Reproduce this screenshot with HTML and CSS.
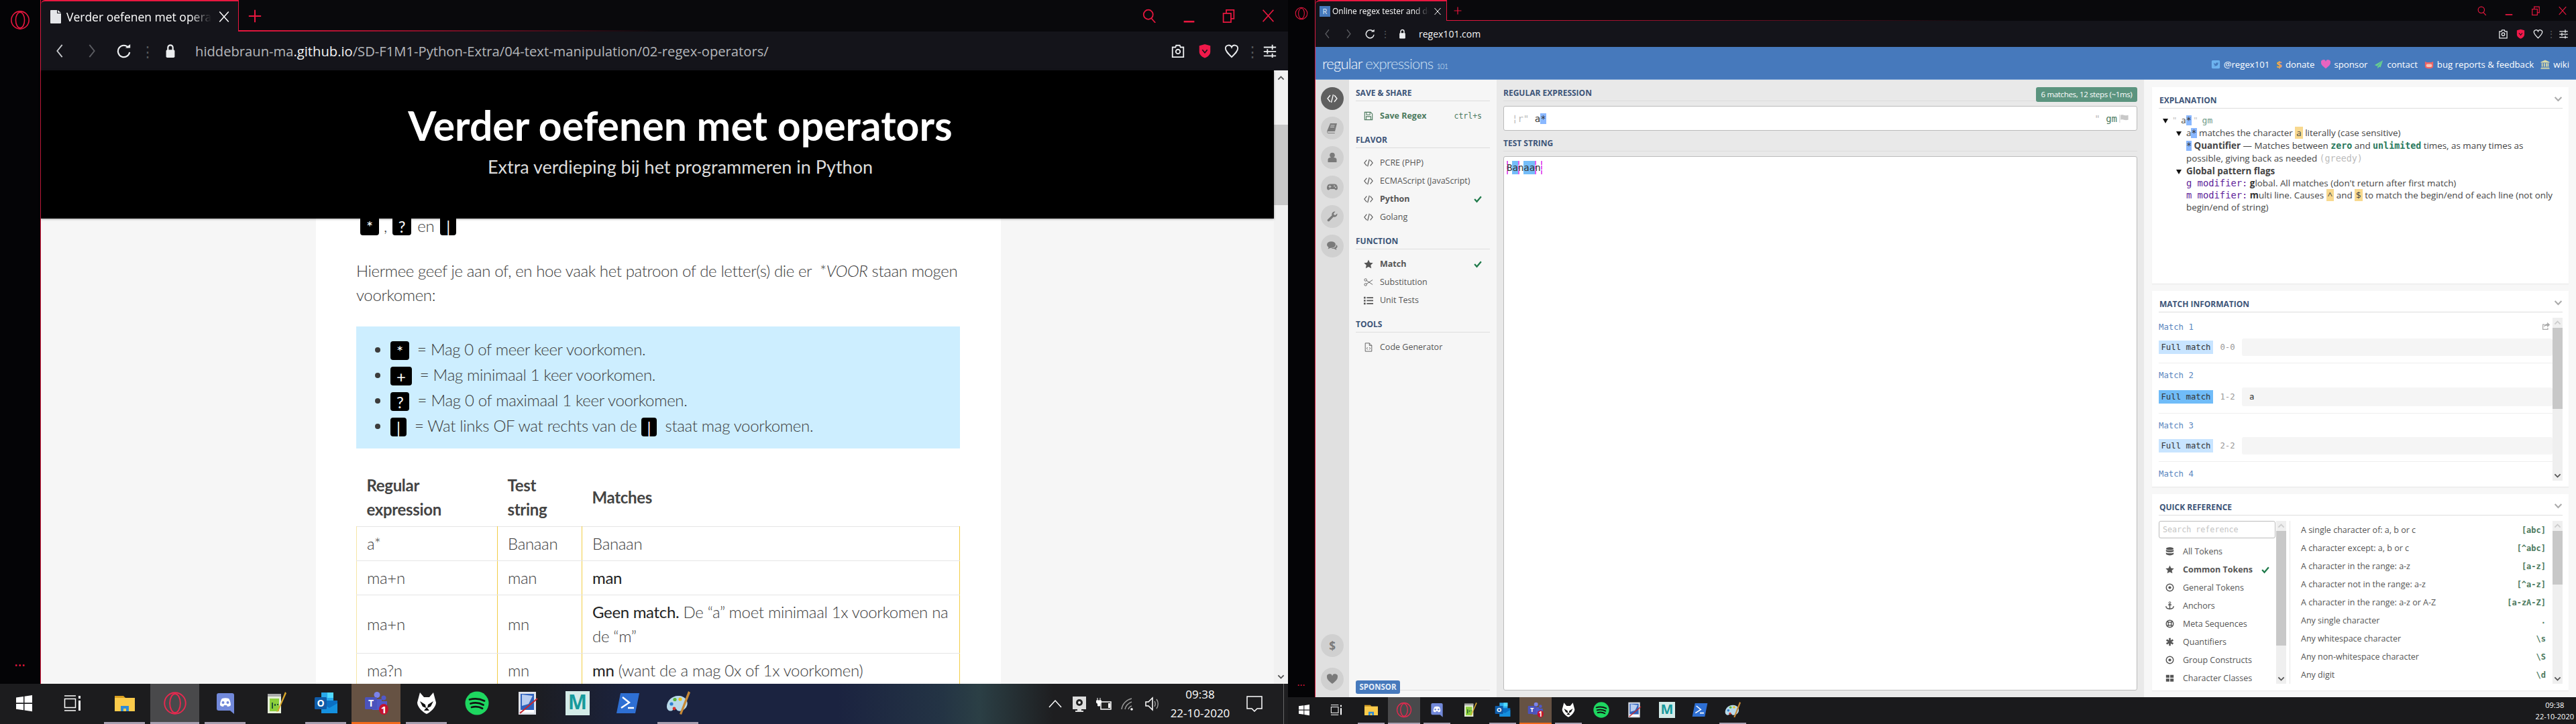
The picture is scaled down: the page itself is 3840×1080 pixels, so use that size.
FILE: index.html
```html
<!DOCTYPE html>
<html lang="en">
  <head>
    <meta charset="UTF-8" />
    <title>Verder oefenen met operators / regex101</title>
    <link rel="stylesheet" href="styles.css">
  </head>
  <body>
    <svg class="sprites" xmlns="http://www.w3.org/2000/svg">
      <!-- browser chrome -->
      <symbol id="i-opera" viewBox="0 0 32 32"><circle cx="16" cy="16" r="14" fill="none" stroke="currentColor" stroke-width="1.700"/><ellipse cx="16" cy="16" rx="7" ry="12.500" fill="none" stroke="currentColor" stroke-width="1.700"/></symbol>
      <symbol id="i-doc" viewBox="0 0 16 20"><path d="M0 1a1 1 0 0 1 1-1h9v5h6v14a1 1 0 0 1-1 1H1a1 1 0 0 1-1-1z" fill="currentColor"/><path d="M11 0l5 4h-5z" fill="currentColor"/></symbol>
      <symbol id="i-x" viewBox="0 0 24 24"><path d="M3 2l18 20M21 2L3 22" fill="none" stroke="currentColor" stroke-width="2"/></symbol>
      <symbol id="i-plus" viewBox="0 0 24 24"><path d="M12 1v22M1 12h22" fill="none" stroke="currentColor" stroke-width="2.400"/></symbol>
      <symbol id="i-back" viewBox="0 0 24 24"><path d="M16 2L8 12l8 10" fill="none" stroke="currentColor" stroke-width="2"/></symbol>
      <symbol id="i-fwd" viewBox="0 0 24 24"><path d="M8 2l8 10-8 10" fill="none" stroke="currentColor" stroke-width="2"/></symbol>
      <symbol id="i-reload" viewBox="0 0 24 24"><path d="M19 6.500A9.500 9.500 0 1 0 21 14" fill="none" stroke="currentColor" stroke-width="2.400"/><path d="M14 7h8V1z" fill="currentColor"/></symbol>
      <symbol id="i-lock" viewBox="0 0 24 24"><path d="M8 11V6.500a4 4 0 0 1 8 0V11" fill="none" stroke="currentColor" stroke-width="2.400"/><rect x="5" y="10" width="14" height="13" rx="2" fill="currentColor"/></symbol>
      <symbol id="i-camera" viewBox="0 0 24 24"><path d="M3 6h5l1-3h6l1 3h5v16H3z" fill="none" stroke="currentColor" stroke-width="2"/><circle cx="12" cy="13" r="3.500" fill="none" stroke="currentColor" stroke-width="2"/></symbol>
      <symbol id="i-shield" viewBox="0 0 24 24"><path d="M3 3.500L12 1l9 2.500V13c0 5-4 8.500-9 10.500C7 21.500 3 18 3 13z" fill="#f0194a"/><path d="M8 10l4 5 4-5" fill="none" stroke="#14141a" stroke-width="1.800"/></symbol>
      <symbol id="i-heart-o" viewBox="0 0 24 24"><path d="M12 22C6 16 2 12 2 8a5.200 5.200 0 0 1 10-2 5.200 5.200 0 0 1 10 2c0 4-4 8-10 14z" fill="none" stroke="currentColor" stroke-width="2"/></symbol>
      <symbol id="i-sliders" viewBox="0 0 24 24"><path d="M2 6h20M2 13h20M2 20h20M16 2v8M8 9v8M16 16v7" fill="none" stroke="currentColor" stroke-width="2"/></symbol>
      <symbol id="i-search" viewBox="0 0 24 24"><circle cx="10" cy="10" r="8" fill="none" stroke="currentColor" stroke-width="2"/><path d="M15 16l7 8" fill="none" stroke="currentColor" stroke-width="2"/></symbol>
      <symbol id="i-min" viewBox="0 0 24 24"><path d="M3 22h18" fill="none" stroke="currentColor" stroke-width="3"/></symbol>
      <symbol id="i-restore" viewBox="0 0 24 24"><rect x="3" y="8" width="13" height="15" fill="none" stroke="currentColor" stroke-width="2"/><path d="M8 8V2h13v15h-5" fill="none" stroke="currentColor" stroke-width="2"/></symbol>

      <!-- taskbar -->
      <symbol id="t-win" viewBox="0 0 36 36"><path d="M6 9.500l11-1.500v9.300H6zM18.500 7.800L30 6v11.300H18.500zM6 19h11v9.300l-11-1.500zM18.500 19H30v11.300l-11.500-1.700z" fill="#fff"/></symbol>
      <symbol id="t-view" viewBox="0 0 36 36"><path d="M6 7h17M6 29h17" stroke="#fff" stroke-width="1.500" fill="none"/><rect x="6.500" y="11.500" width="16" height="13" fill="none" stroke="#fff" stroke-width="1.500"/><path d="M27 7h3v4h-3zM27 14h3v15h-3z" fill="#fff"/></symbol>
      <symbol id="t-folder" viewBox="0 0 36 36"><path d="M3 7h13l3 3H3z" fill="#d99e1f"/><path d="M3 10h30v20H3z" fill="#fbcb4b"/><path d="M12 30v-8h12v8h-4v-4h-4v4z" fill="#2f8bd8"/></symbol>
      <symbol id="t-discord" viewBox="0 0 36 36"><path d="M8 3h20a3 3 0 0 1 3 3v28l-6-5H8a3 3 0 0 1-3-3V6a3 3 0 0 1 3-3z" fill="#7289da"/><path d="M10 21c0-5 2-9 3-10 3-1 7-1 10 0 1 1 3 5 3 10-2 2-4 2-5 2l-1-2h-4l-1 2c-1 0-3 0-5-2z" fill="#fff"/><circle cx="14.500" cy="17" r="2" fill="#7289da"/><circle cx="21.500" cy="17" r="2" fill="#7289da"/></symbol>
      <symbol id="t-npp" viewBox="0 0 36 36"><path d="M6 4h20v29H6z" fill="#e6efd8"/><path d="M6 4h20v4H6z" fill="#aaa"/><path d="M9 11h14v19H9z" fill="#8ccf3c"/><path d="M12 17h2v9h-2zM16 19h2v3h-2zM20 19h2v2h-2z" fill="#253"/><path d="M32 1L21 28l-2 3 3-1L34 3z" fill="#d8a62b"/></symbol>
      <symbol id="t-outlook" viewBox="0 0 36 36"><path d="M11 2h18v16H11z" fill="#28a8ea"/><path d="M20 2h9v8h-9z" fill="#50d9ff"/><path d="M11 14h24v19H11z" fill="#0a6fc4"/><path d="M11 18l12 7 12-7v15H11z" fill="#1490df"/><rect x="1" y="9" width="18" height="18" rx="1.500" fill="#0f5ba8"/></symbol>
      <symbol id="t-teams" viewBox="0 0 36 36"><circle cx="19" cy="5.500" r="4.500" fill="#7b83eb"/><circle cx="29" cy="10" r="3.500" fill="#5059c9"/><path d="M12 12h14v16H12zM25 15h9v10H25z" fill="#5059c9"/><rect x="1" y="9" width="18" height="18" rx="1.500" fill="#4b53bc"/><ellipse cx="29" cy="27" rx="7" ry="8" fill="#c4122f"/></symbol>
      <symbol id="t-alien" viewBox="0 0 36 36"><path d="M8 2l6 7h8l6-7 4 15c0 7-9 15-14 17C13 32 4 24 4 17z" fill="#fff"/><path d="M8 15l8 5 1 5-5-2zM28 15l-8 5-1 5 5-2z" fill="#111"/><path d="M14 29l4-5 4 5z" fill="#111"/></symbol>
      <symbol id="t-spotify" viewBox="0 0 36 36"><circle cx="18" cy="18" r="17.500" fill="#1ed760"/><path d="M7 12.500c8-2.200 15-1.500 22 2M8.500 18.500c7-2 13-1.300 19 2M10 24c6-1.500 11-1 16 1.800" fill="none" stroke="#111" stroke-width="2.800" stroke-linecap="round"/></symbol>
      <symbol id="t-art" viewBox="0 0 36 36"><path d="M5 1h26v34H5z" fill="#dfe3ea"/><path d="M8 4h20v24H8z" fill="#2f62bd"/><path d="M10 5l16 2-6 12-10 3z" fill="#b8cdf0"/><path d="M8 28h20v4H8z" fill="#fff"/><path d="M33 11L7 33" stroke="#c8262c" stroke-width="2" fill="none"/></symbol>
      <symbol id="t-maya" viewBox="0 0 36 36"><path d="M0 0h36v36H0z" fill="#d3ebe8"/></symbol>
      <symbol id="t-pwsh" viewBox="0 0 36 36"><path d="M7 3h28l-6 30H1z" fill="#2e6fd3"/><path d="M10 9l10 8-12 8M18 25h9" fill="none" stroke="#fff" stroke-width="2.400"/></symbol>
      <symbol id="t-palette" viewBox="0 0 36 36"><path d="M18 7C8 7 1 15 1 23c0 7 7 8 9 5s4-3 6 0 10 2 14-4 1-17-12-17z" fill="#b8d9ea"/><circle cx="8" cy="19" r="2.600" fill="#2f7fd0"/><circle cx="13" cy="12.500" r="2.600" fill="#5cb83c"/><circle cx="21" cy="12" r="2.600" fill="#e8c020"/><circle cx="12" cy="26" r="2.400" fill="#d8342c"/><path d="M33 0l3 2-13 33-3-1z" fill="#c88a36"/></symbol>

      <!-- tray -->
      <symbol id="y-up" viewBox="0 0 24 24"><path d="M3 17L12 7l9 10" fill="none" stroke="#fff" stroke-width="1.500"/></symbol>
      <symbol id="y-net" viewBox="0 0 24 24"><path d="M2 1h20v19h-7v2h3v2H6v-2h3v-2H2z" fill="#ddd"/><circle cx="12" cy="10" r="5" fill="#222"/><circle cx="12" cy="10" r="2" fill="#eee"/></symbol>
      <symbol id="y-power" viewBox="0 0 24 24"><path d="M8 9h15v11H8z" fill="#222" stroke="#fff" stroke-width="1.500"/><path d="M3 3v4M7 3v4M1.500 7h7v3l-2 2v3H3.500v-3l-2-2z" fill="#fff" stroke="#fff"/><path d="M19 11h3v7h-3z" fill="#fff"/></symbol>
      <symbol id="y-wifi" viewBox="0 0 24 24"><path d="M3 20C4 12 10 6 18 4M8 20c1-5 5-9 10-11M13 20c.5-2 2-4 5-5" fill="none" stroke="#999" stroke-width="1.500"/><circle cx="18" cy="20" r="1.800" fill="#fff"/></symbol>
      <symbol id="y-vol" viewBox="0 0 24 24"><path d="M3 9h4l6-6v18l-6-6H3z" fill="none" stroke="#fff" stroke-width="1.500"/><path d="M16 8c1.500 2.500 1.500 5.500 0 8M19 5c3 4 3 10 0 14" fill="none" stroke="#aaa" stroke-width="1.300"/></symbol>
      <symbol id="y-note" viewBox="0 0 24 24"><path d="M1 1h22v18h-7l-4 4-4-4H1z" fill="none" stroke="#fff" stroke-width="1.500"/></symbol>

      <!-- regex101 -->
      <symbol id="r-code" viewBox="0 0 16 16"><path d="M5 3L1 8l4 5M11 3l4 5-4 5M9.500 2l-3 12" fill="none" stroke="currentColor" stroke-width="1.300"/></symbol>
      <symbol id="r-book" viewBox="0 0 16 16"><path d="M5 1h10l-3 12H2c-1.500 0-1.500 2 0 2h10l-.5 1H2C0 16 0 13 .8 11z" fill="currentColor"/><path d="M5.500 4h6M5 6.500h6" stroke="#d0d0d0"/></symbol>
      <symbol id="r-user" viewBox="0 0 16 16"><circle cx="8" cy="4.500" r="3.800" fill="currentColor"/><path d="M1.500 15v-4c0-2 2-3 4-3h5c2 0 4 1 4 3v4z" fill="currentColor"/></symbol>
      <symbol id="r-game" viewBox="0 0 16 16"><path d="M4.500 3.500h7c3 0 4.500 3 4.500 6 0 3-3 4-4.500 1.500h-7C3 13.500 0 12.500 0 9.500c0-3 1.500-6 4.500-6z" fill="currentColor"/><path d="M2.500 7.500h4M4.500 5.500v4" stroke="#d0d0d0" stroke-width="1.200"/><circle cx="11" cy="6.500" r="1" fill="#d0d0d0"/><circle cx="13" cy="8.500" r="1" fill="#d0d0d0"/></symbol>
      <symbol id="r-wrench" viewBox="0 0 16 16"><path d="M15.500 4.500a4.300 4.300 0 0 1-5.700 4L3.500 15a1.800 1.800 0 0 1-2.500-2.500l6.500-6.300a4.300 4.300 0 0 1 5-5.500L10 3.500l.5 2 2 .5 2.700-2.500z" fill="currentColor"/></symbol>
      <symbol id="r-comments" viewBox="0 0 16 16"><ellipse cx="6.500" cy="6" rx="6.500" ry="4.800" fill="currentColor"/><path d="M3 9l-1.500 3.500L7 10z" fill="currentColor"/><path d="M14 6c2 1.500 2.500 4-.5 5.500l1 2.500-4-2c-1.500 0-3 0-4-.5 4 0 8-2 7.500-5.500z" fill="currentColor"/></symbol>
      <symbol id="r-heart" viewBox="0 0 16 16"><path d="M8 15C3 11 0 8.500 0 5a4 4 0 0 1 8-1.500A4 4 0 0 1 16 5c0 3.500-3 6-8 10z" fill="currentColor"/></symbol>
      <symbol id="r-save" viewBox="0 0 16 16"><path d="M1.500 1.500h10l3 3v10h-13z" fill="none" stroke="currentColor" stroke-width="1.300"/><path d="M4.500 2v4h6V2M4 14V9h8v5" fill="none" stroke="currentColor" stroke-width="1.200"/></symbol>
      <symbol id="r-check" viewBox="0 0 16 16"><path d="M1.500 8l4.500 5L14.500 3" fill="none" stroke="currentColor" stroke-width="3"/></symbol>
      <symbol id="r-star" viewBox="0 0 16 16"><path d="M8 .5l2.300 5 5.400.6-4 3.700 1.100 5.400L8 12.500l-4.800 2.700 1.100-5.400-4-3.700 5.400-.6z" fill="currentColor"/></symbol>
      <symbol id="r-scissors" viewBox="0 0 16 16"><circle cx="3" cy="4" r="2" fill="none" stroke="currentColor"/><circle cx="3" cy="12" r="2" fill="none" stroke="currentColor"/><path d="M4.500 5L15 12M4.500 11L15 4" stroke="currentColor" fill="none"/></symbol>
      <symbol id="r-list" viewBox="0 0 16 16"><path d="M0 2h3v3H0zM0 7h3v3H0zM0 12h3v3H0zM5 2.500h11v2H5zM5 7.500h11v2H5zM5 12.500h11v2H5z" fill="currentColor"/></symbol>
      <symbol id="r-filecode" viewBox="0 0 16 16"><path d="M2.500 1h7l4 4v10h-11z" fill="none" stroke="currentColor"/><path d="M9.500 1v4h4M6.500 8L5 10l1.500 2M9.500 8l1.500 2-1.500 2" fill="none" stroke="currentColor"/></symbol>
      <symbol id="r-flag" viewBox="0 0 16 16"><path d="M1 1v14" stroke="currentColor"/><path d="M2.500 2c4-1.500 6 1.500 13 0v8c-7 1.500-9-1.500-13 0z" fill="currentColor"/></symbol>
      <symbol id="r-chev-d" viewBox="0 0 16 16"><path d="M2 5l6 6 6-6" fill="none" stroke="currentColor" stroke-width="2.600"/></symbol>
      <symbol id="r-chev-u" viewBox="0 0 16 16"><path d="M2 11l6-6 6 6" fill="none" stroke="currentColor" stroke-width="2.600"/></symbol>
      <symbol id="r-share" viewBox="0 0 16 16"><path d="M10 1v3C5 4 4 7 4 10c1-2 3-3 6-3v3l5-4.500z" fill="currentColor"/><path d="M11 11v3H2V5h3" fill="none" stroke="currentColor" stroke-width="1.500"/></symbol>
      <symbol id="r-db" viewBox="0 0 16 16"><ellipse cx="8" cy="3" rx="7" ry="2.600" fill="currentColor"/><path d="M1 5c2 2 12 2 14 0v3c-2 2-12 2-14 0zM1 10c2 2 12 2 14 0v3c-2 3-12 3-14 0z" fill="currentColor"/></symbol>
      <symbol id="r-target" viewBox="0 0 16 16"><circle cx="8" cy="8" r="6.500" fill="none" stroke="currentColor" stroke-width="1.800"/><circle cx="8" cy="8" r="2.600" fill="currentColor"/></symbol>
      <symbol id="r-anchor" viewBox="0 0 16 16"><circle cx="8" cy="2.500" r="1.700" fill="none" stroke="currentColor" stroke-width="1.200"/><path d="M8 4v11M5 6.500h6M1 9c0 3 3 5 7 5s7-2 7-5" fill="none" stroke="currentColor" stroke-width="1.800"/></symbol>
      <symbol id="r-ring" viewBox="0 0 16 16"><circle cx="8" cy="8" r="6.500" fill="none" stroke="currentColor" stroke-width="1.800"/><circle cx="8" cy="8" r="3" fill="none" stroke="currentColor" stroke-width="1.500"/><path d="M3 3l3 3M13 3l-3 3M3 13l3-3M13 13l-3-3" stroke="currentColor" stroke-width="2.200"/></symbol>
      <symbol id="r-asterisk" viewBox="0 0 16 16"><path d="M8 1v14M2 4.500l12 7M14 4.500l-12 7" stroke="currentColor" stroke-width="3.200"/></symbol>
      <symbol id="r-grid" viewBox="0 0 16 16"><path d="M1 2h6.300v5.500H1zM8.700 2H15v5.500H8.700zM1 9h6.300v5.500H1zM8.700 9H15v5.500H8.700z" fill="currentColor"/></symbol>
      <symbol id="r-twitter" viewBox="0 0 16 16"><rect x="1" y="1" width="14" height="14" rx="2" fill="#6db3ef"/><path d="M4 5c2 1.500 3 2 4 2 0-2 2-3 3.500-1.500L13 5l-1 1.500c0 3-3 5.500-7.500 4 1.500 0 2-.5 2.500-1-1.500-.5-2.500-2-2.500-4.500z" fill="#4679bc"/></symbol>
      <symbol id="r-plane" viewBox="0 0 16 16"><path d="M15 1L1 9l4 2zM15 1L6 11.500V15l3-3 2 1z" fill="#68d08e"/></symbol>
      <symbol id="r-cat" viewBox="0 0 16 16"><path d="M1 3l3 1.500h8L15 3v8c0 3-3 4-7 4s-7-1-7-4z" fill="#ef6464"/><rect x="3" y="7.500" width="10" height="5" rx="2.500" fill="#f7c4b8"/></symbol>
      <symbol id="r-bank" viewBox="0 0 16 16"><path d="M8 .5l7.500 3.500v1H.5V4zM2 6h2v6H2zM5.700 6h2v6h-2zM9.300 6h2v6h-2zM12 6h2v6h-2zM1 13h14v1H1zM.5 14.500h15V16H.5z" fill="#dcdca8"/></symbol>
    </svg>

    <main class="desktop">
      <!-- linker scherm -->
      <section class="screen">
        <div class="window big">
          <aside class="os-rail">
            <svg class="rail-logo"><use href="#i-opera"/></svg>
            <span class="rail-dots">•••</span>
          </aside>
          <div class="browser">
            <div class="tabstrip">
              <div class="tab">
                <svg class="tab-doc"><use href="#i-doc"/></svg>
                <span class="tab-title">Verder oefenen met operators</span>
                <svg class="tab-close"><use href="#i-x"/></svg>
              </div>
              <div class="strip-rest">
                <svg class="tab-plus"><use href="#i-plus"/></svg>
                <div class="win-controls">
                  <svg class="win-btn"><use href="#i-search"/></svg>
                  <svg class="win-btn"><use href="#i-min"/></svg>
                  <svg class="win-btn"><use href="#i-restore"/></svg>
                  <svg class="win-btn"><use href="#i-x"/></svg>
                </div>
              </div>
            </div>
            <div class="toolbar">
              <span class="tool"><svg class="tool-icon muted"><use href="#i-back"/></svg></span>
              <span class="tool"><svg class="tool-icon dim"><use href="#i-fwd"/></svg></span>
              <span class="tool"><svg class="tool-icon"><use href="#i-reload"/></svg></span>
              <span class="tool-sep">⋮</span>
              <span class="tool-lock"><svg class="tool-icon"><use href="#i-lock"/></svg></span>
              <span class="url">hiddebraun-ma<b>.github.io</b>/SD-F1M1-Python-Extra/04-text-manipulation/02-regex-operators/</span>
              <span class="tool push"><svg class="tool-icon"><use href="#i-camera"/></svg></span>
              <span class="tool"><svg class="tool-icon"><use href="#i-shield"/></svg></span>
              <span class="tool"><svg class="tool-icon"><use href="#i-heart-o"/></svg></span>
              <span class="tool-sep narrow">⋮</span>
              <span class="tool-last"><svg class="tool-icon"><use href="#i-sliders"/></svg></span>
            </div>
            <div class="viewport">
              <div class="site">
                <header class="site-header">
                  <h1>Verder oefenen met operators</h1>
                  <p>Extra verdieping bij het programmeren in Python</p>
                </header>
                <div class="site-body">
                  <div class="site-gutter-left"></div>
                  <article class="article">
                    <div class="cut-line">
                      <div class="cut-inner"><code class="key">*</code><span class="comma">,</span><code class="key">?</code><span class="en">en</span><code class="key">|</code></div>
                    </div>
                    <p class="lead">Hiermee geef je aan of, en hoe vaak het patroon of de letter(s) die er &nbsp;*<em>VOOR</em> staan mogen voorkomen:</p>
                    <ul class="callout">
                      <li><code class="key">*</code> = Mag 0 of meer keer voorkomen.</li>
                      <li><code class="key">+</code> = Mag minimaal 1 keer voorkomen.</li>
                      <li><code class="key">?</code> = Mag 0 of maximaal 1 keer voorkomen.</li>
                      <li><code class="key">|</code> = Wat links OF wat rechts van de <code class="key">|</code> staat mag voorkomen.</li>
                    </ul>
                    <table class="regex-table">
                      <colgroup><col class="col-a"><col class="col-b"><col class="col-c"></colgroup>
                      <thead>
                        <tr><th>Regular expression</th><th>Test string</th><th>Matches</th></tr>
                      </thead>
                      <tbody>
                        <tr><td>a*</td><td>Banaan</td><td>Banaan</td></tr>
                        <tr><td>ma+n</td><td>man</td><td><strong>man</strong></td></tr>
                        <tr><td>ma+n</td><td>mn</td><td><strong>Geen match.</strong> De “a” moet minimaal 1x voorkomen na de “m”</td></tr>
                        <tr><td>ma?n</td><td>mn</td><td><strong>mn</strong> (want de a mag 0x of 1x voorkomen)</td></tr>
                      </tbody>
                    </table>
                  </article>
                  <div class="site-gutter-right"></div>
                </div>
              </div>
              <div class="page-scroll">
                <svg class="page-arrow"><use href="#r-chev-u"/></svg>
                <div class="page-thumb"></div>
                <svg class="page-arrow bottom"><use href="#r-chev-d"/></svg>
              </div>
            </div>
          </div>
        </div>
        <footer class="taskbar taskbar-left">
          <span class="slot plain"><svg class="slot-icon"><use href="#t-win"/></svg></span>
          <span class="slot plain"><svg class="slot-icon"><use href="#t-view"/></svg></span>
          <span class="slot pinned first"><svg class="slot-icon"><use href="#t-folder"/></svg></span>
          <span class="slot active"><svg class="slot-icon opera-red"><use href="#i-opera"/></svg></span>
          <span class="slot pinned"><svg class="slot-icon"><use href="#t-discord"/></svg></span>
          <span class="slot"><svg class="slot-icon"><use href="#t-npp"/></svg></span>
          <span class="slot pinned"><svg class="slot-icon" viewBox="0 0 36 36"><use href="#t-outlook"/><text x="10" y="23" class="svg-letter" font-size="14" fill="#fff" text-anchor="middle">O</text></svg></span>
          <span class="slot alert"><svg class="slot-icon" viewBox="0 0 36 36"><use href="#t-teams"/><text x="10" y="23" class="svg-letter" font-size="14" fill="#fff" text-anchor="middle">T</text><text x="29" y="33" class="svg-letter" font-size="15" fill="#fff" text-anchor="middle">1</text></svg></span>
          <span class="slot pinned"><svg class="slot-icon"><use href="#t-alien"/></svg></span>
          <span class="slot"><svg class="slot-icon"><use href="#t-spotify"/></svg></span>
          <span class="slot"><svg class="slot-icon"><use href="#t-art"/></svg></span>
          <span class="slot"><svg class="slot-icon" viewBox="0 0 36 36"><use href="#t-maya"/><text x="18" y="27" class="svg-letter" font-size="30" fill="#179a9c" text-anchor="middle">M</text></svg></span>
          <span class="slot"><svg class="slot-icon"><use href="#t-pwsh"/></svg></span>
          <span class="slot pinned"><svg class="slot-icon"><use href="#t-palette"/></svg></span>
          <div class="tray">
            <svg class="tray-icon"><use href="#y-up"/></svg>
            <svg class="tray-icon"><use href="#y-net"/></svg>
            <svg class="tray-icon"><use href="#y-power"/></svg>
            <svg class="tray-icon"><use href="#y-wifi"/></svg>
            <svg class="tray-icon"><use href="#y-vol"/></svg>
            <div class="clock"><span>09:38</span><span>22-10-2020</span></div>
            <svg class="tray-note"><use href="#y-note"/></svg>
            <span class="tray-edge"></span>
          </div>
        </footer>
      </section>

      <!-- rechter scherm -->
      <section class="screen">
        <div class="window small">
          <aside class="os-rail">
            <svg class="rail-logo"><use href="#i-opera"/></svg>
            <span class="rail-dots">•••</span>
          </aside>
          <div class="browser">
            <div class="tabstrip">
              <div class="tab">
                <span class="favicon">R</span>
                <span class="tab-title">Online regex tester and debugger</span>
                <svg class="tab-close"><use href="#i-x"/></svg>
              </div>
              <div class="strip-rest">
                <svg class="tab-plus"><use href="#i-plus"/></svg>
                <div class="win-controls">
                  <svg class="win-btn"><use href="#i-search"/></svg>
                  <svg class="win-btn"><use href="#i-min"/></svg>
                  <svg class="win-btn"><use href="#i-restore"/></svg>
                  <svg class="win-btn"><use href="#i-x"/></svg>
                </div>
              </div>
            </div>
            <div class="toolbar">
              <span class="tool"><svg class="tool-icon dim"><use href="#i-back"/></svg></span>
              <span class="tool"><svg class="tool-icon dim"><use href="#i-fwd"/></svg></span>
              <span class="tool"><svg class="tool-icon"><use href="#i-reload"/></svg></span>
              <span class="tool-sep">⋮</span>
              <span class="tool-lock"><svg class="tool-icon"><use href="#i-lock"/></svg></span>
              <span class="url"><b>regex101.com</b></span>
              <span class="tool push"><svg class="tool-icon"><use href="#i-camera"/></svg></span>
              <span class="tool"><svg class="tool-icon"><use href="#i-shield"/></svg></span>
              <span class="tool"><svg class="tool-icon"><use href="#i-heart-o"/></svg></span>
              <span class="tool-sep narrow">⋮</span>
              <span class="tool-last"><svg class="tool-icon"><use href="#i-sliders"/></svg></span>
            </div>

            <header class="rx-header">
              <div class="rx-logo"><span class="logo-a">regular</span> <span class="logo-b">expressions</span> <span class="logo-c">101</span></div>
              <nav class="rx-nav">
                <a class="rx-link"><svg class="nav-icon"><use href="#r-twitter"/></svg>@regex101</a>
                <a class="rx-link"><span class="nav-dollar">$</span>donate</a>
                <a class="rx-link"><svg class="nav-icon pink"><use href="#r-heart"/></svg>sponsor</a>
                <a class="rx-link"><svg class="nav-icon"><use href="#r-plane"/></svg>contact</a>
                <a class="rx-link"><svg class="nav-icon"><use href="#r-cat"/></svg>bug reports &amp; feedback</a>
                <a class="rx-link"><svg class="nav-icon"><use href="#r-bank"/></svg>wiki</a>
              </nav>
            </header>

            <div class="rx-app">
              <div class="rx-icons">
                <span class="circle current"><svg><use href="#r-code"/></svg></span>
                <span class="circle"><svg><use href="#r-book"/></svg></span>
                <span class="circle"><svg><use href="#r-user"/></svg></span>
                <span class="circle"><svg><use href="#r-game"/></svg></span>
                <span class="circle"><svg><use href="#r-wrench"/></svg></span>
                <span class="circle"><svg><use href="#r-comments"/></svg></span>
                <span class="circle at-bottom dollar">$</span>
                <span class="circle"><svg><use href="#r-heart"/></svg></span>
              </div>

              <div class="rx-side">
                <h3 class="rx-title">SAVE &amp; SHARE</h3>
                <div class="rx-item save"><svg class="item-icon"><use href="#r-save"/></svg><b>Save Regex</b><code class="shortcut">ctrl+s</code></div>
                <h3 class="rx-title spaced">FLAVOR</h3>
                <div class="rx-item"><svg class="item-icon"><use href="#r-code"/></svg>PCRE (PHP)</div>
                <div class="rx-item"><svg class="item-icon"><use href="#r-code"/></svg>ECMAScript (JavaScript)</div>
                <div class="rx-item"><svg class="item-icon"><use href="#r-code"/></svg><b>Python</b><svg class="item-check"><use href="#r-check"/></svg></div>
                <div class="rx-item"><svg class="item-icon"><use href="#r-code"/></svg>Golang</div>
                <h3 class="rx-title spaced">FUNCTION</h3>
                <div class="rx-item"><svg class="item-icon"><use href="#r-star"/></svg><b>Match</b><svg class="item-check"><use href="#r-check"/></svg></div>
                <div class="rx-item"><svg class="item-icon"><use href="#r-scissors"/></svg>Substitution</div>
                <div class="rx-item"><svg class="item-icon"><use href="#r-list"/></svg>Unit Tests</div>
                <h3 class="rx-title spaced">TOOLS</h3>
                <div class="rx-item"><svg class="item-icon"><use href="#r-filecode"/></svg>Code Generator</div>
                <div class="sponsor-row"><span class="sponsor">SPONSOR</span></div>
              </div>

              <div class="rx-main">
                <h3 class="rx-title with-badge">REGULAR EXPRESSION<span class="badge">6 matches, 12 steps (~1ms)</span></h3>
                <div class="regex-input">
                  <span class="delim">¦r"</span>&nbsp;<span>a</span><span class="hl-token">*</span>
                  <span class="flags"><span class="delim">"</span>&nbsp;gm<svg class="flag"><use href="#r-flag"/></svg></span>
                </div>
                <h3 class="rx-title test-title">TEST STRING</h3>
                <div class="test-box"><i class="zero"></i>B<span class="hit">a</span><i class="zero"></i>n<span class="hit">aa</span><i class="zero"></i>n<i class="zero"></i></div>
              </div>

              <div class="rx-right">
                <section class="panel">
                  <h3 class="rx-title panel-title">EXPLANATION<svg class="chev"><use href="#r-chev-d"/></svg></h3>
                  <div class="explain">
                    <div class="ex-one open"><span class="delim">"</span> &nbsp;a<span class="hl-token">*</span> <span class="delim">"</span> &nbsp;<span class="ex-flags">gm</span></div>
                    <div class="ex-two open">a<span class="hl-token">*</span> matches the character <span class="hl-lit">a</span> literally (case sensitive)</div>
                    <div class="ex-two"><span class="hl-token">*</span> <b>Quantifier</b> — Matches between <code class="ex-green">zero</code> and <code class="ex-green">unlimited</code> times, as many times as possible, giving back as needed <code class="ex-gray">(greedy)</code></div>
                    <div class="ex-two open"><b>Global pattern flags</b></div>
                    <div class="ex-two"><code class="ex-purple">g modifier:</code> <b class="first-letter">g</b>lobal. All matches (don't return after first match)</div>
                    <div class="ex-two"><code class="ex-purple">m modifier:</code> <b class="first-letter">m</b>ulti line. Causes <span class="hl-lit">^</span> and <span class="hl-lit">$</span> to match the begin/end of each line (not only begin/end of string)</div>
                  </div>
                </section>

                <section class="panel">
                  <h3 class="rx-title panel-title">MATCH INFORMATION<svg class="chev"><use href="#r-chev-d"/></svg></h3>
                  <div class="match-wrap">
                    <div class="matches">
                      <div class="match first">
                        <div class="match-name">Match 1<svg class="share"><use href="#r-share"/></svg></div>
                        <div class="match-row"><span class="full">Full match</span><span class="range">0-0</span><span class="value"></span></div>
                      </div>
                      <div class="match">
                        <div class="match-name">Match 2</div>
                        <div class="match-row tall"><span class="full on">Full match</span><span class="range">1-2</span><span class="value">a</span></div>
                      </div>
                      <div class="match">
                        <div class="match-name">Match 3</div>
                        <div class="match-row"><span class="full">Full match</span><span class="range">2-2</span><span class="value"></span></div>
                      </div>
                      <div class="match">
                        <div class="match-name">Match 4</div>
                      </div>
                    </div>
                    <div class="bar">
                      <svg class="bar-arrow"><use href="#r-chev-u"/></svg>
                      <div class="bar-thumb thumb-match"></div>
                      <svg class="bar-arrow end"><use href="#r-chev-d"/></svg>
                    </div>
                  </div>
                </section>

                <section class="panel">
                  <h3 class="rx-title panel-title">QUICK REFERENCE<svg class="chev"><use href="#r-chev-d"/></svg></h3>
                  <div class="quick">
                    <div class="quick-left">
                      <div class="quick-tokens">
                        <input class="quick-search" placeholder="Search reference" />
                        <div class="token"><svg class="item-icon"><use href="#r-db"/></svg>All Tokens</div>
                        <div class="token"><svg class="item-icon"><use href="#r-star"/></svg><b>Common Tokens</b><svg class="item-check"><use href="#r-check"/></svg></div>
                        <div class="token"><svg class="item-icon"><use href="#r-target"/></svg>General Tokens</div>
                        <div class="token"><svg class="item-icon"><use href="#r-anchor"/></svg>Anchors</div>
                        <div class="token"><svg class="item-icon"><use href="#r-ring"/></svg>Meta Sequences</div>
                        <div class="token"><svg class="item-icon"><use href="#r-asterisk"/></svg>Quantifiers</div>
                        <div class="token"><svg class="item-icon"><use href="#r-target"/></svg>Group Constructs</div>
                        <div class="token"><svg class="item-icon"><use href="#r-grid"/></svg>Character Classes</div>
                      </div>
                      <div class="bar">
                        <svg class="bar-arrow"><use href="#r-chev-u"/></svg>
                        <div class="bar-thumb thumb-tokens"></div>
                        <svg class="bar-arrow end"><use href="#r-chev-d"/></svg>
                      </div>
                    </div>
                    <div class="quick-list">
                      <div class="ref"><span>A single character of: a, b or c</span><code>[abc]</code></div>
                      <div class="ref"><span>A character except: a, b or c</span><code>[^abc]</code></div>
                      <div class="ref"><span>A character in the range: a-z</span><code>[a-z]</code></div>
                      <div class="ref"><span>A character not in the range: a-z</span><code>[^a-z]</code></div>
                      <div class="ref"><span>A character in the range: a-z or A-Z</span><code>[a-zA-Z]</code></div>
                      <div class="ref"><span>Any single character</span><code>.</code></div>
                      <div class="ref"><span>Any whitespace character</span><code>\s</code></div>
                      <div class="ref"><span>Any non-whitespace character</span><code>\S</code></div>
                      <div class="ref"><span>Any digit</span><code>\d</code></div>
                    </div>
                    <div class="bar">
                      <svg class="bar-arrow"><use href="#r-chev-u"/></svg>
                      <div class="bar-thumb thumb-refs"></div>
                      <svg class="bar-arrow end"><use href="#r-chev-d"/></svg>
                    </div>
                  </div>
                </section>
              </div>
            </div>
          </div>
        </div>
        <footer class="taskbar taskbar-right">
          <span class="slot plain"><svg class="slot-icon"><use href="#t-win"/></svg></span>
          <span class="slot plain"><svg class="slot-icon"><use href="#t-view"/></svg></span>
          <span class="slot pinned first"><svg class="slot-icon"><use href="#t-folder"/></svg></span>
          <span class="slot active"><svg class="slot-icon opera-red"><use href="#i-opera"/></svg></span>
          <span class="slot pinned"><svg class="slot-icon"><use href="#t-discord"/></svg></span>
          <span class="slot"><svg class="slot-icon"><use href="#t-npp"/></svg></span>
          <span class="slot pinned"><svg class="slot-icon" viewBox="0 0 36 36"><use href="#t-outlook"/><text x="10" y="23" class="svg-letter" font-size="14" fill="#fff" text-anchor="middle">O</text></svg></span>
          <span class="slot alert"><svg class="slot-icon" viewBox="0 0 36 36"><use href="#t-teams"/><text x="10" y="23" class="svg-letter" font-size="14" fill="#fff" text-anchor="middle">T</text><text x="29" y="33" class="svg-letter" font-size="15" fill="#fff" text-anchor="middle">1</text></svg></span>
          <span class="slot pinned"><svg class="slot-icon"><use href="#t-alien"/></svg></span>
          <span class="slot"><svg class="slot-icon"><use href="#t-spotify"/></svg></span>
          <span class="slot"><svg class="slot-icon"><use href="#t-art"/></svg></span>
          <span class="slot"><svg class="slot-icon" viewBox="0 0 36 36"><use href="#t-maya"/><text x="18" y="27" class="svg-letter" font-size="30" fill="#179a9c" text-anchor="middle">M</text></svg></span>
          <span class="slot"><svg class="slot-icon"><use href="#t-pwsh"/></svg></span>
          <span class="slot pinned"><svg class="slot-icon"><use href="#t-palette"/></svg></span>
          <div class="clock"><span>09:38</span><span>22-10-2020</span></div>
        </footer>
      </section>
    </main>
  </body>
</html>
```

FILE: styles.css
```css
* {
  margin: 0;
  padding: 0;
  box-sizing: border-box;
}
html,
body {
  width: 3840px;
  height: 1080px;
  overflow: hidden;
  background: #000;
}
body {
  font-family: "Open Sans", "Liberation Sans", sans-serif;
}
svg {
  display: block;
  flex: none;
}
code {
  font-family: "DejaVu Sans Mono", monospace;
}
.sprites {
  width: 0;
  height: 0;
  overflow: hidden;
}
.svg-letter {
  font-family: "Open Sans", sans-serif;
  font-weight: 700;
}
.desktop {
  display: flex;
  width: 3840px;
  height: 1080px;
}
.screen {
  width: 1920px;
  height: 1080px;
  display: flex;
  flex-direction: column;
}
.window {
  flex: 1;
  min-height: 0;
  display: flex;
}

/* size sets for the two browser windows */
.big {
  --rail: 60px;
  --strip: 47px;
  --bar: 58px;
  --tool: 48px;
  --tool-r: 40px;
  --tool-icon: 22px;
  --logo: 30px;
  --logo-top: 15px;
  --dots-pad: 22px;
}
.small {
  --rail: 40px;
  --strip: 31px;
  --bar: 39px;
  --tool: 32px;
  --tool-r: 26px;
  --tool-icon: 15px;
  --logo: 20px;
  --logo-top: 10px;
  --dots-pad: 13px;
}

.os-rail {
  width: var(--rail);
  flex: none;
  background: #040406;
  display: flex;
  flex-direction: column;
  align-items: center;
  justify-content: space-between;
  padding-top: var(--logo-top);
  padding-bottom: var(--dots-pad);
}
.rail-logo {
  width: var(--logo);
  height: var(--logo);
  color: #e8173f;
}
.rail-dots {
  color: #e8173f;
  font-size: 12px;
  line-height: 10px;
  letter-spacing: 1px;
}
.small .rail-dots {
  font-size: 8px;
}
.browser {
  flex: 1;
  min-width: 0;
  display: flex;
  flex-direction: column;
  border-left: 1px solid #d81b40;
}

/* tabs */
.tabstrip {
  height: var(--strip);
  flex: none;
  display: flex;
  background: #09090c;
}
.tab {
  display: flex;
  align-items: center;
  background: #14141a;
  border-top: 2px solid #e8173f;
  border-right: 1px solid #e8173f;
  border-top-left-radius: 6px;
  color: #fff;
}
.big .tab {
  width: 295px;
  padding-left: 14px;
}
.small .tab {
  width: 196px;
  padding-left: 6px;
}
.tab-doc {
  width: 16px;
  height: 20px;
  color: #e4e6e9;
  margin-right: 8px;
}
.favicon {
  width: 16px;
  height: 16px;
  background: #4679bc;
  color: #dfe8f5;
  font-size: 11px;
  line-height: 16px;
  text-align: center;
  margin-right: 3px;
  flex: none;
}
.tab-title {
  overflow: hidden;
  white-space: nowrap;
  -webkit-mask-image: linear-gradient(90deg, #000 85%, transparent);
}
.big .tab-title {
  width: 216px;
  font-size: 17.500px;
}
.small .tab-title {
  width: 144px;
  font-size: 12px;
}
.big .tab-close {
  width: 18px;
  height: 18px;
  margin-left: 10px;
}
.small .tab-close {
  width: 12px;
  height: 12px;
  margin-left: 7px;
}
.strip-rest {
  flex: 1;
  display: flex;
  align-items: center;
  background: linear-gradient(90deg, #e8173f, rgba(232, 23, 63, 0)) bottom left / 40% 2px no-repeat;
}
.small .strip-rest {
  background-size: 48% 1px;
}
.tab-plus {
  color: #e8173f;
}
.big .tab-plus {
  width: 20px;
  height: 20px;
  margin-left: 14px;
}
.small .tab-plus {
  width: 12px;
  height: 12px;
  margin-left: 10px;
}
.win-controls {
  margin-left: auto;
  display: flex;
  align-items: center;
  color: #e8173f;
}
.big .win-controls {
  gap: 38px;
  padding-right: 19px;
}
.small .win-controls {
  gap: 26px;
  padding-right: 13px;
}
.big .win-btn {
  width: 21px;
  height: 21px;
}
.small .win-btn {
  width: 14px;
  height: 14px;
}

/* toolbar */
.toolbar {
  height: var(--bar);
  flex: none;
  display: flex;
  align-items: center;
  background: #14141a;
  color: #fff;
}
.big .toolbar {
  padding: 0 3px 0 4px;
}
.small .toolbar {
  padding: 0 2px 0 1px;
}
.tool {
  width: var(--tool);
  display: flex;
  justify-content: center;
}
.tool.push,
.tool.push ~ .tool {
  width: var(--tool-r);
}
.push {
  margin-left: auto;
}
.tool-icon {
  width: var(--tool-icon);
  height: var(--tool-icon);
  color: #eceef0;
}
.tool-icon.muted {
  color: #c8cace;
}
.tool-icon.dim {
  color: #5c5d62;
}
.tool-sep {
  text-align: center;
  color: #55565a;
  line-height: 1;
}
.big .tool-sep {
  width: 16px;
  font-size: 22px;
}
.small .tool-sep {
  width: 14px;
  font-size: 14px;
}
.big .tool-sep.narrow {
  width: 12px;
}
.small .tool-sep.narrow {
  width: 8px;
}
.big .tool-lock {
  width: 58px;
  display: flex;
  justify-content: center;
}
.small .tool-lock {
  width: 36px;
  display: flex;
  justify-content: center;
}
.url {
  color: #b4b7bb;
  white-space: nowrap;
}
.url b {
  font-weight: 400;
  color: #f2f3f4;
}
.big .url {
  font-size: 20.200px;
  margin-left: 8px;
}
.small .url {
  font-size: 14px;
  margin-left: 7px;
}
.big .tool-last {
  width: 49px;
  display: flex;
  justify-content: center;
}
.small .tool-last {
  width: 34px;
  display: flex;
  justify-content: center;
}

/* left page */
.viewport {
  flex: 1;
  min-height: 0;
  display: flex;
}
.site {
  flex: 1;
  min-width: 0;
  display: flex;
  flex-direction: column;
  font-family: Lato, sans-serif;
}
.site-header {
  position: relative;
  z-index: 1;
  height: 221px;
  flex: none;
  background: #000;
  color: #fff;
  text-align: center;
  padding: 52px 0 0 68px;
  box-shadow: 0 1px 3px rgba(0, 0, 0, 0.35);
}
.site-header h1 {
  font-size: 60.700px;
  font-weight: 700;
  line-height: 60px;
}
.site-header p {
  font-size: 27px;
  line-height: 34px;
  color: #ddd;
  margin-top: 15px;
}
.site-body {
  flex: 1;
  min-height: 0;
  display: flex;
  overflow: hidden;
}
.site-gutter-left {
  width: 410px;
  flex: none;
  background: #f6f6f6;
}
.site-gutter-right {
  flex: 1;
  background: #f6f6f6;
}
.article {
  width: 1021px;
  flex: none;
  background: #fff;
  padding: 0 61px 0 60px;
  font-size: 24px;
  line-height: 36px;
  font-weight: 300;
  letter-spacing: -0.32px;
  color: #3c3c3c;
}
.cut-line {
  height: 25px;
  overflow: hidden;
  margin-bottom: 35px;
}
.cut-inner {
  display: flex;
  align-items: center;
  height: 36px;
  margin: -7px 0 0 6px;
}
.cut-inner .key {
  margin-right: 0;
}
.comma {
  margin: 0 8px 0 7px;
}
.en {
  margin: 0 9px 0 9px;
}
.key {
  display: inline-block;
  height: 28px;
  line-height: 30px;
  padding: 0 9px;
  background: #000;
  color: #fff;
  border-radius: 4px;
  font-family: Lato, sans-serif;
  font-weight: 400;
  font-size: 24px;
  vertical-align: -3px;
  margin-right: 6px;
}
.lead {
  letter-spacing: -0.38px;
}
.lead em {
  font-style: italic;
}
.callout {
  background: #cdeeff;
  margin-top: 29px;
  padding: 15px 0 15px 51px;
  line-height: 38px;
  height: 182px;
}
.regex-table {
  width: 900px;
  margin-top: 30px;
  table-layout: fixed;
  border-collapse: collapse;
}
.col-a {
  width: 210px;
}
.col-b {
  width: 126px;
}
.regex-table th {
  text-align: left;
  font-weight: 700;
  color: #444;
  padding: 7px 15px;
}
.regex-table td {
  padding: 7px 15px;
  border-top: 1px solid #e5e5e5;
  border-bottom: 1px solid #e5e5e5;
  border-left: 1px solid #f2cd46;
  border-right: 1px solid #f2cd46;
}
.regex-table td:first-child {
  border-left-color: #f6e6a6;
}
.regex-table strong {
  font-weight: 400;
  color: #222;
}
.page-scroll {
  width: 21px;
  flex: none;
  background: #f1f1f1;
  display: flex;
  flex-direction: column;
  align-items: center;
}
.page-arrow {
  width: 11px;
  height: 11px;
  margin-top: 6px;
  color: #505050;
}
.page-arrow.bottom {
  margin-top: auto;
  margin-bottom: 5px;
}
.page-thumb {
  width: 21px;
  height: 120px;
  margin-top: 64px;
  background: #c8c8c8;
}

/* taskbars */
.taskbar {
  flex: none;
  display: flex;
  color: #fff;
}
.taskbar-left {
  height: 60px;
  background: linear-gradient(90deg, #1c1c1e 0, #1c1c1e 780px, #1b2340 950px, #1b2340 1250px, #233344 1400px, #2b3f45 1460px, #1e1e20 1570px);
}
.taskbar-right {
  height: 40px;
  background: #1a1a1c;
}
.slot {
  display: flex;
  align-items: center;
  justify-content: center;
  border-bottom: 3px solid transparent;
  flex: none;
}
.taskbar-left .slot {
  width: 61px;
  margin: 0 7px;
}
.taskbar-left .slot.plain {
  width: 72px;
  margin: 0;
}
.taskbar-left .slot.first {
  margin-left: 11px;
}
.taskbar-left .slot.active,
.taskbar-left .slot.alert {
  width: 73px;
  margin: 0 1px;
}
.taskbar-right .slot {
  width: 40px;
  margin: 0 4.500px;
  border-bottom-width: 2px;
}
.taskbar-right .slot.plain {
  width: 48px;
  margin: 0;
}
.taskbar-right .slot.first {
  margin-left: 7.500px;
}
.taskbar-right .slot.active,
.taskbar-right .slot.alert {
  width: 48px;
  margin: 0 0.500px;
}
.slot.pinned {
  border-bottom-color: #a79fb0;
}
.slot.active {
  background: #49494b;
  border-bottom-color: #a79fb0;
}
.slot.alert {
  background: #665243;
  border-bottom-color: #f26a1b;
}
.slot-icon {
  width: 36px;
  height: 36px;
}
.taskbar-right .slot-icon {
  width: 24px;
  height: 24px;
}
.opera-red {
  color: #e8294f;
}
.tray {
  margin-left: auto;
  display: flex;
  align-items: center;
  padding-right: 6px;
}
.tray-icon {
  width: 24px;
  height: 24px;
  margin-right: 12px;
}
.tray-note {
  width: 24px;
  height: 24px;
  margin-left: 19px;
}
.tray-edge {
  width: 1px;
  height: 60px;
  background: #666;
  margin-left: 31px;
}
.clock {
  display: flex;
  flex-direction: column;
  align-items: center;
  justify-content: center;
}
.tray .clock {
  width: 100px;
  margin-left: -2px;
  font-size: 17px;
  line-height: 28px;
}
.taskbar-right .clock {
  margin-left: auto;
  padding-right: 3px;
  font-size: 11px;
  line-height: 17px;
}

/* regex101 */
.rx-header {
  height: 49px;
  flex: none;
  background: #4679bc;
  display: flex;
  align-items: center;
  color: #fff;
  padding: 0 10px 0 10px;
  border-bottom: 1px solid #6f9ad0;
}
.rx-logo {
  font-family: Lato, sans-serif;
  font-weight: 300;
  font-size: 22px;
  letter-spacing: -0.8px;
  white-space: nowrap;
}
.logo-b {
  color: #cfe0f2;
}
.logo-c {
  font-size: 11px;
  color: #cfe0f2;
}
.rx-nav {
  margin-left: auto;
  display: flex;
  gap: 10px;
  font-size: 13.200px;
  padding-top: 3px;
}
.rx-link {
  display: flex;
  align-items: center;
  gap: 5px;
  white-space: nowrap;
}
.nav-icon {
  width: 14px;
  height: 14px;
}
.nav-icon.pink {
  color: #e864c0;
}
.nav-dollar {
  color: #efa850;
  font-weight: 700;
  font-size: 15px;
}
.rx-app {
  flex: 1;
  min-height: 0;
  display: flex;
  color: #555;
  font-size: 12.500px;
}
.rx-icons {
  width: 50px;
  flex: none;
  background: #e0e0e0;
  display: flex;
  flex-direction: column;
  align-items: center;
  gap: 10px;
  padding: 11px 0 10px;
}
.circle {
  width: 34px;
  height: 34px;
  flex: none;
  border-radius: 50%;
  background: #d0d0d0;
  color: #7a7a7a;
  display: flex;
  align-items: center;
  justify-content: center;
}
.circle svg {
  width: 16px;
  height: 16px;
}
.circle.current {
  background: #5f5f5f;
  color: #fff;
}
.circle.at-bottom {
  margin-top: auto;
  margin-bottom: 6px;
}
.dollar {
  font-size: 17px;
  font-weight: 700;
}
.rx-side {
  width: 220px;
  flex: none;
  background: #f6f6f6;
  padding: 11px 10px 0;
  display: flex;
  flex-direction: column;
}
.rx-title {
  height: 21px;
  flex: none;
  font-size: 12px;
  line-height: 17px;
  font-weight: 700;
  color: #3c5478;
  padding-bottom: 3px;
  border-bottom: 1px solid #ddd;
}
.rx-title.spaced {
  margin-top: 14px;
}
.rx-item {
  height: 27px;
  flex: none;
  display: flex;
  align-items: center;
  padding: 0 12px;
}
.rx-title + .rx-item {
  margin-top: 8px;
}
.rx-item b,
.token b {
  font-weight: 700;
}
.item-icon {
  width: 14px;
  height: 14px;
  margin-right: 10px;
  color: #555;
}
.item-check {
  width: 12px;
  height: 12px;
  margin-left: auto;
  color: #1f7a4a;
}
.save,
.save .item-icon {
  color: #4c7a5e;
}
.shortcut {
  margin-left: auto;
  font-size: 11.500px;
}
.sponsor-row {
  margin-top: auto;
  height: 25px;
  flex: none;
  background: linear-gradient(#ddd, #ddd) 0 14px / 100% 1px no-repeat;
}
.sponsor {
  display: block;
  width: 66px;
  height: 20px;
  background: #4679bc;
  border-radius: 3px;
  color: #e6eef8;
  font-size: 11.500px;
  font-weight: 700;
  line-height: 20px;
  text-align: center;
}
.rx-main {
  width: 965px;
  flex: none;
  background: #e9e9e9;
  padding: 11px 10px 10px;
  display: flex;
  flex-direction: column;
}
.with-badge {
  display: flex;
  justify-content: space-between;
}
.badge {
  width: 151px;
  height: 22px;
  background: #5b947f;
  border-radius: 3px;
  color: #fff;
  font-weight: 400;
  font-size: 11.500px;
  letter-spacing: -0.35px;
  line-height: 21px;
  text-align: center;
  white-space: nowrap;
}
.regex-input {
  height: 37px;
  flex: none;
  margin-top: 7px;
  display: flex;
  align-items: center;
  padding: 0 12px;
  background: #fff;
  border: 1px solid #bbb;
  border-radius: 3px;
  font-family: "DejaVu Sans Mono", monospace;
  font-size: 14px;
  color: #333;
}
.delim {
  color: #b9b9b9;
}
.hl-token {
  background: #8ab8ff;
  color: #333;
  font-family: "DejaVu Sans Mono", monospace;
}
.flags {
  margin-left: auto;
  display: flex;
  align-items: center;
  color: #4c7a5e;
}
.flag {
  width: 14px;
  height: 14px;
  margin-left: 3px;
  color: #c8c8c8;
}
.test-title {
  margin-top: 10px;
}
.test-box {
  flex: 1;
  margin-top: 7px;
  background: #fff;
  border: 1px solid #bbb;
  border-radius: 3px;
  padding: 6px 4px;
  font-family: "DejaVu Sans Mono", monospace;
  font-size: 14px;
  line-height: 20px;
  color: #333;
}
.hit {
  background: #74bdf9;
  display: inline-block;
}
.zero {
  display: inline-block;
  width: 0;
  height: 20px;
  vertical-align: top;
  border-left: 2px dashed #e25cf0;
  margin-right: -2px;
}
.rx-right {
  flex: 1;
  min-width: 0;
  background: #f7f7f7;
  padding: 11px 11px 10px 12px;
  display: grid;
  grid-template-rows: repeat(3, 1fr);
  gap: 11px;
}
.panel {
  background: #fff;
  padding: 11px 9px 0 10px;
  min-height: 0;
  overflow: hidden;
  display: flex;
  flex-direction: column;
  box-shadow: 0 1px 1px rgba(0, 0, 0, 0.06);
}
.panel-title {
  display: flex;
  justify-content: space-between;
  padding-left: 1px;
}
.chev {
  width: 13px;
  height: 13px;
  color: #aaa;
}
.explain {
  margin-top: 8px;
  padding-right: 8px;
  line-height: 18px;
  font-size: 13.400px;
  color: #444;
}
.explain b {
  font-weight: 700;
}
.ex-one {
  padding-left: 21px;
}
.ex-two {
  padding-left: 41px;
}
.open::before {
  content: "";
  display: inline-block;
  width: 0;
  height: 0;
  border-left: 4px solid transparent;
  border-right: 4px solid transparent;
  border-top: 7px solid #111;
  margin-left: -15px;
  margin-right: 7px;
}
.ex-flags {
  font-family: "DejaVu Sans Mono", monospace;
  font-size: 13px;
  color: #6e9a88;
}
.hl-lit {
  background: #f8d98f;
  padding: 0 2px;
}
.ex-green {
  font-size: 13.300px;
  font-weight: 700;
  color: #27795c;
}
.ex-gray {
  font-size: 13.300px;
  color: #bbb;
}
.ex-purple {
  font-size: 13.800px;
  color: #5e1d99;
}
.first-letter {
  color: #333;
}
.match-wrap {
  margin-top: 8px;
  height: 244px;
  display: flex;
}
.matches {
  flex: 1;
  min-width: 0;
  overflow: hidden;
  font-family: "DejaVu Sans Mono", monospace;
  font-size: 12.300px;
}
.match {
  padding: 9px 0 10px;
  border-bottom: 1px solid #eee;
}
.match.first {
  padding-top: 5px;
}
.match:last-child {
  border-bottom: 0;
}
.match-name {
  display: flex;
  justify-content: space-between;
  line-height: 18px;
  color: #5b87c0;
}
.share {
  width: 13px;
  height: 13px;
  margin: 1px 3px 0 0;
  color: #aaa;
}
.match-row {
  display: flex;
  align-items: center;
  height: 26px;
  margin-top: 8px;
  color: #333;
}
.match-row.tall {
  height: 28px;
  margin-top: 9px;
}
.full {
  width: 81px;
  height: 20px;
  line-height: 20px;
  text-align: center;
  background: #c8e4ff;
}
.full.on {
  background: #70bcf8;
}
.range {
  width: 43px;
  text-align: center;
  color: #999;
}
.value {
  flex: 1;
  height: 100%;
  background: #f5f5f5;
  border-radius: 3px;
  line-height: 28px;
  padding-left: 11px;
}
.bar {
  width: 15px;
  flex: none;
  background: #efefef;
  display: flex;
  flex-direction: column;
  align-items: center;
  height: 243px;
}
.bar-arrow {
  width: 11px;
  height: 11px;
  margin: 2px 0;
  color: #ccc;
}
.bar-arrow.end {
  margin-top: auto;
  color: #555;
}
.bar-thumb {
  width: 15px;
  background: #c8c8c8;
}
.thumb-match {
  height: 121px;
}
.thumb-tokens {
  height: 171px;
}
.thumb-refs {
  height: 80px;
}
.quick {
  margin-top: 8px;
  display: flex;
  height: 243px;
}
.quick-left {
  width: 196px;
  flex: none;
  display: flex;
  border-right: 1px solid #e5e5e5;
  padding-right: 5px;
}
.quick-tokens {
  flex: 1;
  min-width: 0;
  overflow: hidden;
}
.quick-search {
  display: block;
  width: 174px;
  height: 26px;
  border: 1px solid #bbb;
  border-radius: 3px;
  padding: 0 5px;
  font-family: "DejaVu Sans Mono", monospace;
  font-size: 11.700px;
  outline: none;
  margin-bottom: 6px;
}
.quick-search::placeholder {
  color: #c4c4c4;
}
.token {
  height: 27px;
  display: flex;
  align-items: center;
  padding: 0 10px 0 10px;
}
.token .item-icon {
  width: 13px;
  height: 13px;
  margin-right: 13px;
  color: #555;
}
.quick-list {
  flex: 1;
  min-width: 0;
  overflow: hidden;
  padding: 0 10px 0 16px;
}
.ref {
  height: 27px;
  display: flex;
  align-items: center;
  justify-content: space-between;
}
.ref code {
  font-weight: 700;
  font-size: 12px;
  color: #4c7a5e;
}
```
